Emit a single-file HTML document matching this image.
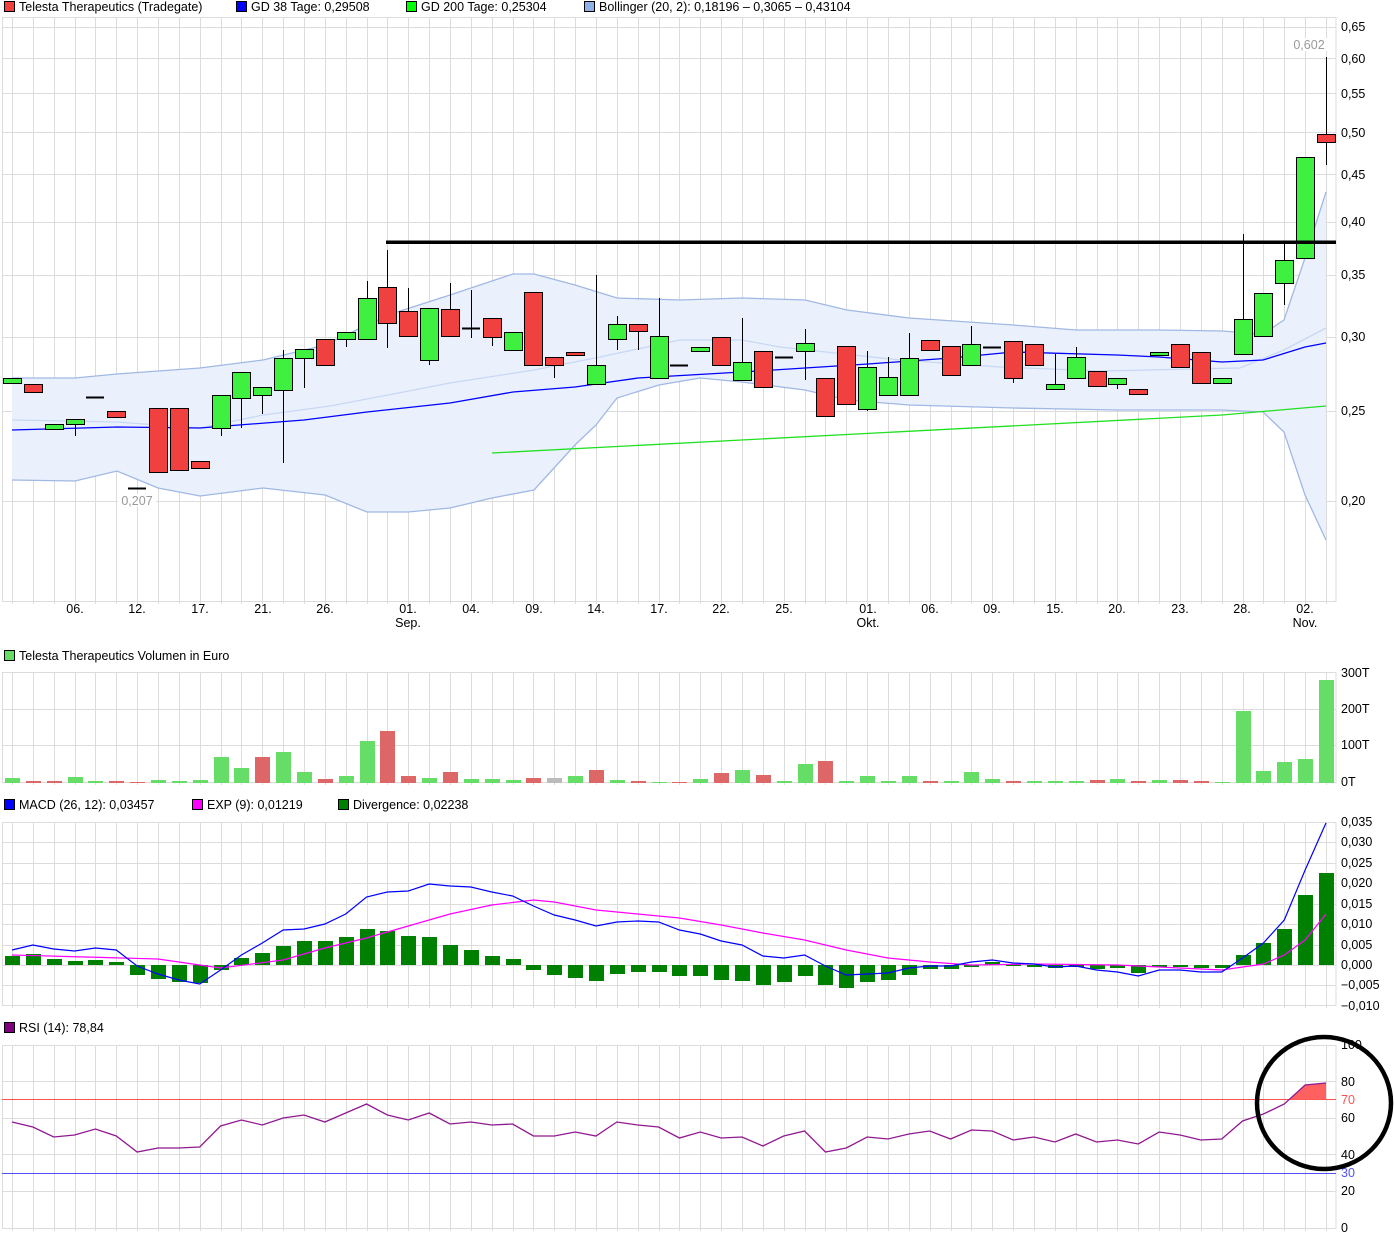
<!DOCTYPE html>
<html><head><meta charset="utf-8"><style>
html,body{margin:0;padding:0;background:#fff;}
body{width:1394px;height:1244px;overflow:hidden;position:relative;font-family:"Liberation Sans",sans-serif;font-size:12.5px;color:#000;}
svg{position:absolute;left:0;top:0;}
svg text{font-family:"Liberation Sans",sans-serif;font-size:12.5px;}
</style></head><body>
<svg id="s" width="1394" height="1244" xmlns="http://www.w3.org/2000/svg">
<g id="grid"></g>
<g id="bb"></g>
<g id="lines"></g>
<g id="cand"></g>
<g id="vol"></g>
<g id="macd"></g>
<g id="rsi"></g>
<rect x="4.5" y="1.5" width="10" height="10" fill="#f04040" stroke="#000"/>
<text x="19" y="11">Telesta Therapeutics (Tradegate)</text>
<rect x="236.5" y="1.5" width="10" height="10" fill="#0000ff" stroke="#000"/>
<text x="251" y="11">GD 38 Tage: 0,29508</text>
<rect x="406.5" y="1.5" width="10" height="10" fill="#00ff00" stroke="#000"/>
<text x="421" y="11">GD 200 Tage: 0,25304</text>
<rect x="584.5" y="1.5" width="10" height="10" fill="#90b0e8" stroke="#000"/>
<text x="599" y="11">Bollinger (20, 2): 0,18196 – 0,3065 – 0,43104</text>
<rect x="4.5" y="650.5" width="10" height="10" fill="#66dd66" stroke="#000"/>
<text x="19" y="660">Telesta Therapeutics Volumen in Euro</text>
<rect x="4.5" y="799.5" width="10" height="10" fill="#0000ff" stroke="#000"/>
<text x="19" y="809">MACD (26, 12): 0,03457</text>
<rect x="192.5" y="799.5" width="10" height="10" fill="#ff00ff" stroke="#000"/>
<text x="207" y="809">EXP (9): 0,01219</text>
<rect x="338.5" y="799.5" width="10" height="10" fill="#008000" stroke="#000"/>
<text x="353" y="809">Divergence: 0,02238</text>
<rect x="4.5" y="1022.5" width="10" height="10" fill="#800080" stroke="#000"/>
<text x="19" y="1032">RSI (14): 78,84</text>
<g>
<text x="1341" y="31">0,65</text><text x="1341" y="63">0,60</text><text x="1341" y="98">0,55</text>
<text x="1341" y="137">0,50</text><text x="1341" y="179">0,45</text><text x="1341" y="226">0,40</text>
<text x="1341" y="279">0,35</text><text x="1341" y="341">0,30</text><text x="1341" y="415">0,25</text>
<text x="1341" y="505">0,20</text>
</g>
<g text-anchor="middle">
<text x="75" y="613">06.</text><text x="137" y="613">12.</text><text x="200" y="613">17.</text>
<text x="263" y="613">21.</text><text x="325" y="613">26.</text><text x="408" y="613">01.</text><text x="408" y="627">Sep.</text>
<text x="471" y="613">04.</text><text x="534" y="613">09.</text><text x="596" y="613">14.</text>
<text x="659" y="613">17.</text><text x="721" y="613">22.</text><text x="784" y="613">25.</text>
<text x="868" y="613">01.</text><text x="868" y="627">Okt.</text><text x="930" y="613">06.</text>
<text x="992" y="613">09.</text><text x="1055" y="613">15.</text><text x="1117" y="613">20.</text>
<text x="1180" y="613">23.</text><text x="1242" y="613">28.</text><text x="1305" y="613">02.</text><text x="1305" y="627">Nov.</text>
</g>
<rect x="118" y="494" width="38" height="13" fill="#fff"/>
<text x="137" y="505" text-anchor="middle" fill="#999">0,207</text>
<rect x="1290" y="38" width="38" height="13" fill="#fff"/>
<text x="1309" y="49" text-anchor="middle" fill="#999">0,602</text>
<text x="1341" y="677">300T</text><text x="1341" y="713">200T</text><text x="1341" y="749">100T</text><text x="1341" y="786">0T</text>
<text x="1341" y="826">0,035</text><text x="1341" y="846">0,030</text><text x="1341" y="867">0,025</text>
<text x="1341" y="887">0,020</text><text x="1341" y="908">0,015</text><text x="1341" y="928">0,010</text>
<text x="1341" y="949">0,005</text><text x="1341" y="969">0,000</text><text x="1341" y="989">−0,005</text>
<text x="1341" y="1010">−0,010</text>
<text x="1341" y="1049">100</text><text x="1341" y="1086">80</text><text x="1341" y="1104" fill="#ff5050">70</text>
<text x="1341" y="1122">60</text><text x="1341" y="1159">40</text><text x="1341" y="1177" fill="#5050ff">30</text>
<text x="1341" y="1195">20</text><text x="1341" y="1232">0</text>
<ellipse cx="1324" cy="1103" rx="67" ry="66" fill="none" stroke="#000" stroke-width="4.5"/>
</svg>
<script>
var NS="http://www.w3.org/2000/svg";
function el(p,t,a){var e=document.createElementNS(NS,t);for(var k in a)e.setAttribute(k,a[k]);document.getElementById(p).appendChild(e);return e;}
function X(i){return 12+(i-1)*20.857;}
var gc="#dcdcdc";
var panels=[[17,601,[27,58,93,132,174,222,275,337,411,501]],[672,782,[709,745]],[822,1005,[842,863,883,904,924,945,965,985]],[1045,1228,[1081,1118,1154,1191]]];
panels.forEach(function(p){
 for(var i=1;i<=64;i++){var x=Math.round(X(i))+0.5;el("grid","line",{x1:x,y1:p[0],x2:x,y2:p[1]+3,stroke:gc});}
 el("grid","rect",{x:2.5,y:p[0]+.5,width:1333.5,height:p[1]-p[0],fill:"none",stroke:gc});
 p[2].forEach(function(y){el("grid","line",{x1:2,y1:y+.5,x2:1336,y2:y+.5,stroke:gc});});
});
var up=[[12,378],[75,378],[117,374],[200,368],[263,360],[325,345],[388,315],[450,295],[513,274],[534,274],[575,285],[617,298],[680,300],[742,298],[805,300],[847,310],[909,318],[1013,325],[1076,330],[1159,330],[1222,331],[1263,334],[1284,320],[1305,258],[1326,192]];
var lo=[[12,480],[75,481],[117,471],[158,488],[200,496],[263,488],[325,495],[367,512],[408,512],[450,508],[492,498],[534,490],[575,445],[596,425],[617,398],[659,385],[700,378],[742,382],[805,390],[847,400],[909,405],[1013,408],[1117,410],[1222,410],[1263,412],[1284,432],[1305,495],[1326,540]];
var mid=[[12,420],[117,422],[200,428],[263,415],[330,406],[388,395],[450,383],[534,370],[600,357],[680,340],[742,340],[780,347],[900,360],[1000,367],[1100,371],[1240,368],[1284,350],[1326,328]];
function pts(a){return a.map(function(p){return p.join(",");}).join(" ");}
el("bb","polygon",{points:pts(up)+" "+pts(lo.slice().reverse()),fill:"#eaf1fc"});
el("bb","polyline",{points:pts(up),fill:"none",stroke:"#a0b8e4","stroke-width":1.3});
el("bb","polyline",{points:pts(lo),fill:"none",stroke:"#a0b8e4","stroke-width":1.3});
el("bb","polyline",{points:pts(mid),fill:"none",stroke:"#c8d8f4","stroke-width":1.3});
var gd38=[[12,430],[117,427],[200,428],[304,420],[367,412],[450,403],[513,392],[575,387],[638,378],[742,372],[805,368],[868,364],[951,358],[1013,352],[1117,355],[1159,357],[1222,362],[1263,360],[1305,347],[1326,343]];
el("lines","polyline",{points:pts(gd38),fill:"none",stroke:"#0000ff","stroke-width":1.3});
el("lines","polyline",{points:"492,453 1222,415 1326,406",fill:"none",stroke:"#22e022","stroke-width":1.3});
var C=[
["g",378,383],["r",384,392],["g",424,429],["g",419,424,419,436],["d",397],["r",411,417],["d",488],["r",408,472],["r",408,470],["r",461,468],
["g",395,428,395,436],["g",372,398,372,428],["g",387,395,387,414],["g",358,390,350,463],["g",349,358,349,388],["r",339,365],["g",332,339,332,347],["g",298,339,281,339],["r",287,323,250,348],["r",311,336,288,336],
["g",308,360,308,365],["r",309,336,283,336],["d",328,290,338],["r",318,337,318,346],["g",332,350],["r",292,365],["r",357,365,357,378],["r",352,355],["g",365,384,275,384],["g",324,339,316,350],
["r",324,331,324,350],["g",336,378,298,378],["d",365],["g",347,351],["r",337,365],["g",362,380,318,380],["r",351,387],["d",357],["g",343,351,329,380],["r",378,416],
["r",346,404],["g",367,409,351,411],["g",377,395,357,395],["g",358,395,333,395],["r",340,350],["r",346,375],["g",344,365,326,365],["d",347],["r",341,378,341,383],["r",344,365],
["g",384,389,354,389],["g",357,378,347,378],["r",371,386],["g",378,384,378,389],["r",389,394],["g",352,355],["r",344,367],["r",352,383],["g",378,383],["g",319,354,234,354],
["g",293,336],["g",260,283,244,305],["g",157,258],["r",134,142,57,165]];
C.forEach(function(c,k){var x=Math.round(X(k+1));
 if(c[0]=="d"){var h=c[2]||c[1],l=c[3]||c[1];if(h!=l)el("cand","line",{x1:x+.5,y1:h,x2:x+.5,y2:l,stroke:"#000"});
  el("cand","line",{x1:x-9,y1:c[1]+.5,x2:x+9,y2:c[1]+.5,stroke:"#000","stroke-width":2});return;}
 var h=c[3]||c[1],l=c[4]||c[2];
 if(h<c[1]||l>c[2])el("cand","line",{x1:x+.5,y1:h,x2:x+.5,y2:l,stroke:"#000"});
 el("cand","rect",{x:x-8.5,y:c[1]+.5,width:18,height:Math.max(c[2]-c[1],3),fill:c[0]=="g"?"#40f040":"#f04040",stroke:"#000"});
});
el("cand","rect",{x:386,y:240.5,width:950,height:3.5,fill:"#000"});
var V={1:778,2:781,3:781,4:777,5:781,6:781,7:782,8:780,9:781,10:780,11:757,12:768,13:757,14:752,15:772,16:779,17:776,18:741,19:731,20:776,21:778,22:772,23:779,24:779,25:780,26:778,27:778,28:776,29:770,30:780,31:781,32:782,33:782,34:779,35:773,36:770,37:775,38:781,39:764,40:761,41:781,42:776,43:781,44:776,45:781,46:781,47:772,48:779,49:781,50:781,51:781,52:781,53:780,54:779,55:781,56:780,57:780,58:781,59:782,60:711,61:771,62:762,63:759,64:680};
var red={2:1,3:1,6:1,7:1,13:1,16:1,19:1,20:1,22:1,26:1,29:1,31:1,33:1,35:1,37:1,40:1,45:1,49:1,53:1,55:1,57:1,58:1};
for(var i=1;i<=64;i++){var x=Math.round(X(i));var col=red[i]?"#dd6666":"#66dd66";if(i==27)col="#bbbbbb";
 el("vol","rect",{x:x-7,y:V[i],width:15,height:783-V[i],fill:col});}
var D=[956,954,959,961,960,962,975,979,982,983,970,958,953,946,941,941,937,929,931,936,937,945,950,956,959,970,975,978,981,974,972,972,976,976,980,981,985,982,976,985,988,982,980,975,969,969,967,962,964,966,968,967,969,968,973,967,967,968,968,955,943,929,895,873];
D.forEach(function(y,k){var x=Math.round(X(k+1));var t=Math.min(y,965),b=Math.max(y,965);el("macd","rect",{x:x-7,y:t,width:15,height:Math.max(b-t,2),fill:"#008000"});});
var M=[950,945,949,951,948,950,966,974,980,984,970,955,943,930,929,924,914,897,892,891,884,886,887,892,896,906,915,920,926,922,921,922,930,934,941,945,956,958,955,966,975,974,973,968,966,966,962,960,963,964,967,966,970,972,976,970,970,972,972,958,943,920,870,823];
var Ek={1:955,8:959,11:968,14:960,16:948,18:938,20:926,22:914,24:905,26:900,27:902,29:910,31:914,33:918,35:925,37:933,39:940,41:950,43:958,45:962,47:965,50:964,54:965,57:968,59:970,60:967,61:964,62:955,63:940,64:914};
function interp(o){var ks=Object.keys(o).map(Number).sort(function(a,b){return a-b;});var r=[];for(var i=1;i<=64;i++){for(var j=0;j<ks.length-1;j++){if(i>=ks[j]&&i<=ks[j+1]){var t=(i-ks[j])/(ks[j+1]-ks[j]);r.push(o[ks[j]]+(o[ks[j+1]]-o[ks[j]])*t);break;}}}return r;}
var E=interp(Ek);
el("macd","polyline",{points:E.map(function(y,k){return X(k+1)+","+y;}).join(" "),fill:"none",stroke:"#ff00ff","stroke-width":1.2});
el("macd","polyline",{points:M.map(function(y,k){return X(k+1)+","+y;}).join(" "),fill:"none",stroke:"#0000ff","stroke-width":1.2});
el("rsi","line",{x1:2,y1:1099.5,x2:1336,y2:1099.5,stroke:"#ff5050"});
el("rsi","line",{x1:2,y1:1173.5,x2:1336,y2:1173.5,stroke:"#5050ff"});
var R=[1122,1127,1137,1135,1129,1136,1152,1148,1148,1147,1126,1120,1125,1118,1115,1122,1113,1104,1115,1120,1113,1124,1122,1125,1124,1136,1136,1132,1136,1122,1125,1127,1138,1132,1138,1137,1146,1136,1131,1152,1148,1137,1139,1134,1131,1139,1130,1131,1140,1137,1142,1134,1142,1140,1144,1132,1135,1140,1139,1121,1114,1104,1085,1083];
el("rsi","polygon",{points:"1290,1099.5 "+X(63)+",1085 "+X(64)+",1083 "+X(64)+",1099.5",fill:"#ff6060"});
el("rsi","polyline",{points:R.map(function(y,k){return X(k+1)+","+y;}).join(" "),fill:"none",stroke:"#901890","stroke-width":1.3});
</script>
</body></html>
